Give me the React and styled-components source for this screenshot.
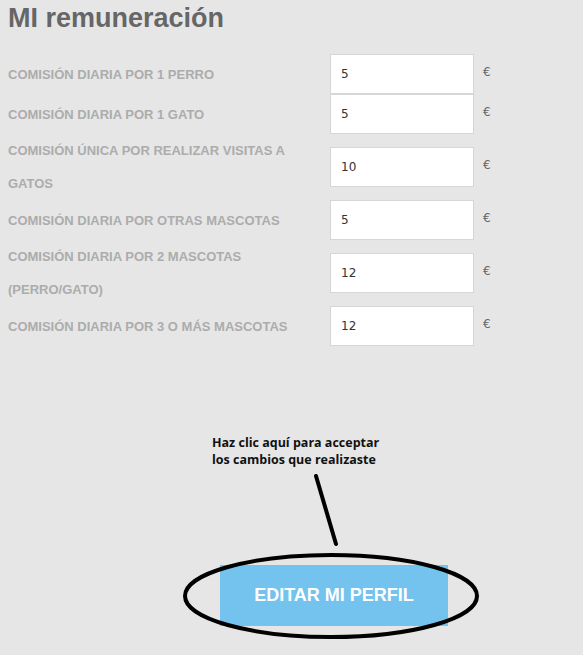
import React from "react";
import styled, { createGlobalStyle } from "styled-components";

const Global = createGlobalStyle`
  html, body {
    margin: 0;
    padding: 0;
    background: #e6e6e6;
  }
  body {
    font-family: "Liberation Sans", Arial, sans-serif;
  }
`;

const rates = [
  { label: "Comisión diaria por 1 perro", value: "5" },
  { label: "Comisión diaria por 1 gato", value: "5" },
  { label: "Comisión única por realizar visitas a gatos", value: "10" },
  { label: "Comisión diaria por otras mascotas", value: "5" },
  { label: "Comisión diaria por 2 mascotas (perro/gato)", value: "12" },
  { label: "Comisión diaria por 3 o más mascotas", value: "12" },
];

export default function App() {
  return (
    <Page>
      <Global />
      <Title>MI remuneración</Title>
      <Form>
        {rates.map((r) => (
          <Row key={r.label}>
            <Label>{r.label}</Label>
            <Input defaultValue={r.value} />
            <Currency>€</Currency>
          </Row>
        ))}
      </Form>
      <Note>
        <NoteText>
          Haz clic aquí para acceptar
          <br />
          los cambios que realizaste
        </NoteText>
        <Pointer width="28" height="74" viewBox="0 0 28 74">
          <line x1="4" y1="3" x2="24" y2="71" stroke="#000" strokeWidth="4" strokeLinecap="round" />
        </Pointer>
      </Note>
      <ButtonWrap>
        <EditButton>EDITAR MI PERFIL</EditButton>
        <Circle width="300" height="88" viewBox="0 0 300 88">
          <ellipse cx="149" cy="43" rx="146" ry="41" fill="none" stroke="#000" strokeWidth="4" />
        </Circle>
      </ButtonWrap>
    </Page>
  );
}

const Page = styled.div`
  padding: 0 0 0 8px;
  min-height: 655px;
  box-sizing: border-box;
`;

const Title = styled.h1`
  margin: 0;
  padding-top: 2px;
  font-size: 27px;
  line-height: 32px;
  font-weight: bold;
  color: #666;
`;

const Form = styled.div`
  margin-top: 20px;
  display: flex;
  flex-direction: column;
`;

const Row = styled.div`
  display: flex;
  align-items: center;
`;

const Label = styled.div`
  width: 300px;
  margin-right: 22px;
  font-family: "Liberation Sans", Arial, sans-serif;
  font-weight: bold;
  font-size: 13px;
  line-height: 33px;
  text-transform: uppercase;
  color: #acacac;
`;

const Input = styled.input`
  width: 144px;
  height: 40px;
  box-sizing: border-box;
  border: 1px solid #d6d6d6;
  background: #fff;
  padding: 0 10px;
  font-family: "DejaVu Sans", sans-serif;
  font-size: 12px;
  color: #333;
  outline: none;
`;

const Currency = styled.span`
  margin-left: 9px;
  margin-top: -4px;
  font-family: "DejaVu Sans", sans-serif;
  font-size: 12px;
  color: #666;
`;

const Note = styled.div`
  margin-top: 88px;
  padding-left: 204px;
  display: flex;
  flex-direction: column;
`;

const NoteText = styled.div`
  font-family: "Open Sans", sans-serif;
  font-weight: bold;
  font-size: 12.5px;
  line-height: 17px;
  color: #111;
`;

const Pointer = styled.svg`
  display: block;
  margin: 5px 0 0 100px;
`;

const ButtonWrap = styled.div`
  position: relative;
  margin: 18px 0 0 212px;
  width: 228px;
`;

const EditButton = styled.button`
  display: block;
  width: 228px;
  height: 61px;
  border: none;
  background: #74c2ee;
  color: #fff;
  font-family: "Liberation Sans", Arial, sans-serif;
  font-weight: bold;
  font-size: 18px;
`;

const Circle = styled.svg`
  position: absolute;
  left: -38px;
  top: -12px;
  pointer-events: none;
`;
